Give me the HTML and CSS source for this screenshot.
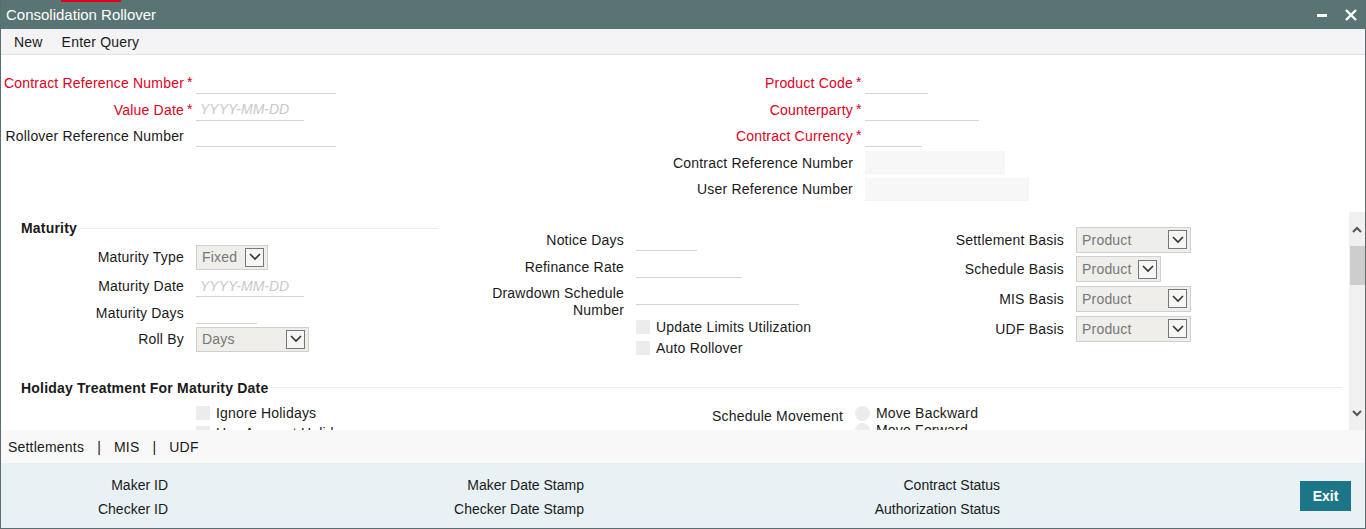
FILE: index.html
```html
<!DOCTYPE html>
<html lang="en">
<head>
    <meta charset="UTF-8">
    <meta name="viewport" content="width=device-width, initial-scale=1.0">
    <title>Consolidation Rollover</title>
    <link rel="stylesheet" href="styles.css">
</head>
<body>
<div class="window">
    <div class="titlebar">
        <span class="accent"></span>
        <span class="title">Consolidation Rollover</span>
        <div class="win-ctrls">
            <span class="min-btn"></span>
            <svg class="close-btn" width="12" height="12" viewBox="0 0 12 12">
                <path d="M1 1 L11 11 M11 1 L1 11" stroke="#fff" stroke-width="2.4"/>
            </svg>
        </div>
    </div>

    <div class="toolbar">
        <span>New</span>
        <span>Enter Query</span>
    </div>

    <!-- header fields -->
    <div class="header-form">
        <div class="hf-left">
            <div class="row">
                <label class="lbl req-lbl">Contract Reference Number</label><span class="req">*</span>
                <input class="txt w140" type="text">
            </div>
            <div class="row">
                <label class="lbl req-lbl">Value Date</label><span class="req">*</span>
                <input class="txt w108" type="text" placeholder="YYYY-MM-DD">
            </div>
            <div class="row">
                <label class="lbl">Rollover Reference Number</label><span class="req"></span>
                <input class="txt w140" type="text">
            </div>
        </div>
        <div class="hf-right">
            <div class="row">
                <label class="lbl req-lbl">Product Code</label><span class="req">*</span>
                <input class="txt w63" type="text">
            </div>
            <div class="row">
                <label class="lbl req-lbl">Counterparty</label><span class="req">*</span>
                <input class="txt w114" type="text">
            </div>
            <div class="row">
                <label class="lbl req-lbl">Contract Currency</label><span class="req">*</span>
                <input class="txt w57" type="text">
            </div>
            <div class="row">
                <label class="lbl">Contract Reference Number</label><span class="req"></span>
                <input class="txt ro w140" type="text" readonly>
            </div>
            <div class="row">
                <label class="lbl">User Reference Number</label><span class="req"></span>
                <input class="txt ro w164" type="text" readonly>
            </div>
        </div>
    </div>

    <!-- scrolling body -->
    <div class="scroll-wrap">
        <div class="scroll-body">
            <div class="mat-grid">
                <div class="mat-left">
                    <div class="legend legend-mat"><span>Maturity</span><i></i></div>
                    <div class="row r-type">
                        <label class="lbl">Maturity Type</label>
                        <div class="select w72"><span>Fixed</span><span class="arrow"><svg width="12" height="8" viewBox="0 0 12 8"><path d="M1 1 L6 6 L11 1" fill="none" stroke="#333" stroke-width="1.6"/></svg></span></div>
                    </div>
                    <div class="row r-date">
                        <label class="lbl">Maturity Date</label>
                        <input class="txt w108" type="text" placeholder="YYYY-MM-DD">
                    </div>
                    <div class="row r-days">
                        <label class="lbl">Maturity Days</label>
                        <input class="txt w61" type="text">
                    </div>
                    <div class="row r-roll">
                        <label class="lbl">Roll By</label>
                        <div class="select w113"><span>Days</span><span class="arrow"><svg width="12" height="8" viewBox="0 0 12 8"><path d="M1 1 L6 6 L11 1" fill="none" stroke="#333" stroke-width="1.6"/></svg></span></div>
                    </div>
                </div>

                <div class="mat-mid">
                    <div class="row row-in">
                        <label class="lbl">Notice Days</label>
                        <input class="txt w61" type="text">
                    </div>
                    <div class="row row-in">
                        <label class="lbl">Refinance Rate</label>
                        <input class="txt w106" type="text">
                    </div>
                    <div class="row row-two">
                        <label class="lbl">Drawdown Schedule<br>Number</label>
                        <input class="txt w163" type="text">
                    </div>
                    <div class="row row-chk">
                        <span class="chk"></span><span>Update Limits Utilization</span>
                    </div>
                    <div class="row row-chk">
                        <span class="chk"></span><span>Auto Rollover</span>
                    </div>
                </div>

                <div class="mat-right">
                    <div class="row row-basis">
                        <label class="lbl">Settlement Basis</label>
                        <div class="select w115"><span>Product</span><span class="arrow"><svg width="12" height="8" viewBox="0 0 12 8"><path d="M1 1 L6 6 L11 1" fill="none" stroke="#333" stroke-width="1.6"/></svg></span></div>
                    </div>
                    <div class="row row-basis">
                        <label class="lbl">Schedule Basis</label>
                        <div class="select w85"><span>Product</span><span class="arrow"><svg width="12" height="8" viewBox="0 0 12 8"><path d="M1 1 L6 6 L11 1" fill="none" stroke="#333" stroke-width="1.6"/></svg></span></div>
                    </div>
                    <div class="row row-basis">
                        <label class="lbl">MIS Basis</label>
                        <div class="select w115"><span>Product</span><span class="arrow"><svg width="12" height="8" viewBox="0 0 12 8"><path d="M1 1 L6 6 L11 1" fill="none" stroke="#333" stroke-width="1.6"/></svg></span></div>
                    </div>
                    <div class="row row-basis">
                        <label class="lbl">UDF Basis</label>
                        <div class="select w115"><span>Product</span><span class="arrow"><svg width="12" height="8" viewBox="0 0 12 8"><path d="M1 1 L6 6 L11 1" fill="none" stroke="#333" stroke-width="1.6"/></svg></span></div>
                    </div>
                </div>
            </div>

            <div class="legend legend-hol"><span>Holiday Treatment For Maturity Date</span><i></i></div>
            <div class="hol-body">
                <div class="hol-left">
                    <div class="row row-chk2"><span class="chk"></span><span>Ignore Holidays</span></div>
                    <div class="row row-chk2"><span class="chk"></span><span>Use Account Holiday</span></div>
                </div>
                <div class="hol-right">
                    <label class="lbl">Schedule Movement</label>
                    <div class="radios">
                        <div class="radio-row"><span class="rad"></span><span>Move Backward</span></div>
                        <div class="radio-row"><span class="rad"></span><span>Move Forward</span></div>
                    </div>
                </div>
            </div>
        </div>
        <div class="scrollbar">
            <div class="sb-btn">
                <svg width="10" height="7" viewBox="0 0 10 7"><path d="M1 6 L5 2 L9 6" fill="none" stroke="#555" stroke-width="2"/></svg>
            </div>
            <div class="sb-track">
                <div class="sb-thumb"></div>
            </div>
            <div class="sb-btn">
                <svg width="10" height="7" viewBox="0 0 10 7"><path d="M1 1 L5 5 L9 1" fill="none" stroke="#555" stroke-width="2"/></svg>
            </div>
        </div>
    </div>

    <div class="tabs">
        <a href="#">Settlements</a><span class="sep">|</span><a href="#">MIS</a><span class="sep">|</span><a href="#">UDF</a>
    </div>

    <div class="footer">
        <div class="audit">
            <div class="audit-col c1">
                <span>Maker ID</span>
                <span>Checker ID</span>
            </div>
            <div class="audit-col c2">
                <span>Maker Date Stamp</span>
                <span>Checker Date Stamp</span>
            </div>
            <div class="audit-col c3">
                <span>Contract Status</span>
                <span>Authorization Status</span>
            </div>
        </div>
        <button class="btn-exit">Exit</button>
    </div>
</div>
</body>
</html>
```

FILE: styles.css
```css
* {
    margin: 0;
    padding: 0;
    box-sizing: border-box;
}

body {
    font-family: "Liberation Sans", Arial, sans-serif;
    font-size: 14px;
    letter-spacing: 0.2px;
    color: #1a1a1a;
    background-color: #fff;
    width: 1366px;
    height: 529px;
    overflow: hidden;
}

.window {
    width: 1366px;
    height: 529px;
    border: 1px solid #56706f;
    border-top: none;
    display: flex;
    flex-direction: column;
    background-color: #fff;
}

/* title bar */
.titlebar {
    position: relative;
    height: 29px;
    background-color: #587473;
    display: flex;
    align-items: center;
    padding-left: 5px;
    padding-right: 8px;
}

.accent {
    position: absolute;
    top: 0;
    left: 60px;
    width: 60px;
    height: 2px;
    background-color: #e2001a;
}

.title {
    color: #fff;
    font-size: 15px;
    letter-spacing: 0;
    flex: 1;
}

.win-ctrls {
    display: flex;
    align-items: center;
    gap: 18px;
}

.min-btn {
    display: block;
    width: 10px;
    height: 3px;
    margin-top: 2px;
    background-color: #fff;
}

/* toolbar */
.toolbar {
    height: 26px;
    background-color: #f4f4f6;
    border-bottom: 1px solid #e2e3e5;
    display: flex;
    align-items: center;
    gap: 19px;
    padding-left: 13px;
}

/* generic rows */
.row {
    display: flex;
    align-items: center;
}

.lbl {
    text-align: right;
    flex-shrink: 0;
}

.req-lbl {
    color: #e0001b;
}

.req {
    width: 12px;
    flex-shrink: 0;
    color: #e0001b;
    padding-left: 3px;
    align-self: flex-start;
    padding-top: 4px;
}

.txt {
    height: 22px;
    border: none;
    border-bottom: 1px solid #d4d4d4;
    background: transparent;
    font-family: inherit;
    font-size: 14px;
    padding: 0 4px;
    outline: none;
}

.txt::placeholder {
    color: #c8c8c8;
    font-style: italic;
}

.txt.ro {
    height: 23px;
    background-color: #f7f7f7;
    border-bottom: 1px solid #f3f3f3;
}

.w57 { width: 57px; }
.w61 { width: 61px; }
.w63 { width: 63px; }
.w106 { width: 106px; }
.w108 { width: 108px; }
.w114 { width: 114px; }
.w140 { width: 140px; }
.w163 { width: 163px; }
.w164 { width: 164px; }

/* header form */
.header-form {
    display: flex;
    height: 157px;
    padding-top: 15px;
}

.header-form .row {
    height: 26.5px;
}

.hf-left {
    width: 639px;
}

.hf-left .lbl {
    width: 183px;
}

.hf-right .lbl {
    width: 213px;
}

/* scroll area */
.scroll-wrap {
    height: 218px;
    display: flex;
}

.scroll-body {
    flex: 1;
    overflow: hidden;
}

.mat-grid {
    display: grid;
    grid-template-columns: 449px 400px 1fr;
    padding-top: 6px;
}

.legend {
    display: flex;
    align-items: center;
    height: 20px;
    font-weight: bold;
    padding-left: 20px;
}

.legend i {
    flex: 1;
    height: 1px;
    margin-left: 3px;
    background-color: #ececec;
}

.legend-mat {
    margin-right: 12px;
    margin-bottom: 4.5px;
}

.legend-hol {
    margin-top: 19.5px;
    margin-right: 7px;
}

.mat-left .lbl {
    width: 183px;
    margin-right: 12px;
}

.r-type { height: 29.5px; }
.r-date { height: 28px; }
.r-days { height: 26px; }
.r-roll { height: 26px; }

.mat-mid {
    padding-top: 8.5px;
}

.mat-mid .lbl {
    width: 174px;
    margin-right: 12px;
}

.mat-right {
    padding-top: 7px;
}

.mat-right .lbl {
    width: 214px;
    margin-right: 12px;
}

.row-in {
    height: 27px;
}

.row-in + .row-in {
    height: 27.5px;
}

.row-two {
    height: 35px;
    align-items: flex-start;
    padding-top: 4px;
}

.row-two .lbl {
    line-height: 17px;
}

.row-two .txt {
    margin-top: -2px;
}

.row-chk {
    height: 21px;
    padding-left: 186px;
}

.row-basis {
    height: 29.6px;
}

.chk {
    display: inline-block;
    width: 14px;
    height: 14px;
    background-color: #ececec;
    margin-right: 6px;
}

.select {
    display: flex;
    align-items: center;
    justify-content: space-between;
    height: 26px;
    border: 1px solid #d0d0d0;
    background-color: #efeeea;
    color: #777;
    padding-left: 5px;
    padding-right: 3px;
}

.mat-left .select {
    height: 25px;
}

.arrow {
    display: flex;
    align-items: center;
    justify-content: center;
    width: 19px;
    height: 19px;
    border: 1px solid #777;
    background-color: #f6f6f4;
}

.w72 { width: 72px; }
.w85 { width: 85px; }
.w113 { width: 113px; }
.w115 { width: 115px; }

/* holiday */
.hol-body {
    display: flex;
    margin-top: 5px;
}

.hol-left {
    width: 519px;
    padding-left: 195px;
}

.row-chk2 {
    height: 20px;
}

.hol-right {
    display: flex;
}

.hol-right .lbl {
    width: 323px;
    margin-right: 12px;
    padding-top: 5px;
}

.radio-row {
    display: flex;
    align-items: center;
    height: 17px;
}

.radio-row:first-child {
    margin-top: 2px;
}

.rad {
    display: inline-block;
    width: 15px;
    height: 15px;
    border-radius: 50%;
    background-color: #ececec;
    margin-right: 6px;
}

/* scrollbar */
.scrollbar {
    width: 16px;
    background-color: #f0f0f0;
    display: flex;
    flex-direction: column;
}

.sb-btn {
    height: 34px;
    display: flex;
    align-items: center;
    justify-content: center;
}

.sb-track {
    flex: 1;
    padding-left: 1px;
}

.sb-thumb {
    height: 39px;
    background-color: #cdcdcd;
}

/* tabs */
.tabs {
    height: 33px;
    background-color: #f8f8f8;
    display: flex;
    align-items: center;
    padding-left: 7px;
}

.tabs a {
    color: #1a1a1a;
    text-decoration: none;
}

.tabs .sep {
    margin: 0 13px;
}

/* footer */
.footer {
    flex: 1;
    background-color: #e8f2f4;
    display: flex;
    align-items: center;
    padding-right: 14px;
}

.audit {
    flex: 1;
    display: flex;
    padding-top: 3px;
}

.audit-col {
    display: flex;
    flex-direction: column;
    align-items: flex-end;
    gap: 8px;
    letter-spacing: 0;
}

.c1 { width: 167px; }
.c2 { width: 416px; }
.c3 { width: 416px; }

.btn-exit {
    width: 51px;
    height: 30px;
    background-color: #1d7688;
    color: #fff;
    border: none;
    font-family: inherit;
    font-size: 14px;
    font-weight: bold;
    cursor: pointer;
}

.btn-exit:hover {
    background-color: #165f6e;
}
```
